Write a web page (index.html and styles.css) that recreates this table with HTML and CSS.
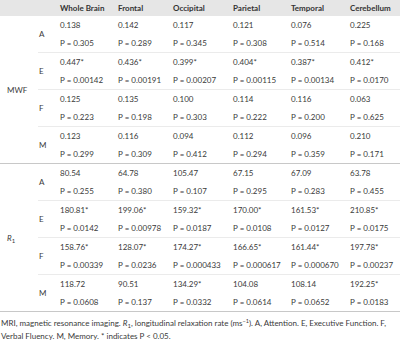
FILE: index.html
```html
<!DOCTYPE html>
<html>
<head>
<meta charset="utf-8">
<link rel="stylesheet" href="styles.css">
</head>
<body>
<table class="tbl">
  <colgroup>
    <col class="c-grp"><col class="c-cat"><col class="c-wb"><col class="c-fr"><col class="c-oc"><col class="c-pa"><col class="c-te"><col class="c-ce">
  </colgroup>
  <thead>
    <tr><th></th><th></th><th>Whole Brain</th><th>Frontal</th><th>Occipital</th><th>Parietal</th><th>Temporal</th><th>Cerebellum</th></tr>
  </thead>
  <tbody>
    <tr class="v"><td rowspan="8" class="grp end">MWF</td><td rowspan="2" class="cat">A</td><td>0.138</td><td>0.142</td><td>0.117</td><td>0.121</td><td>0.076</td><td>0.225</td></tr>
    <tr class="p"><td>P = 0.305</td><td>P = 0.289</td><td>P = 0.345</td><td>P = 0.308</td><td>P = 0.514</td><td>P = 0.168</td></tr>
    <tr class="v"><td rowspan="2" class="cat">E</td><td>0.447*</td><td>0.436*</td><td>0.399*</td><td>0.404*</td><td>0.387*</td><td>0.412*</td></tr>
    <tr class="p"><td>P = 0.00142</td><td>P = 0.00191</td><td>P = 0.00207</td><td>P = 0.00115</td><td>P = 0.00134</td><td>P = 0.0170</td></tr>
    <tr class="v"><td rowspan="2" class="cat">F</td><td>0.125</td><td>0.135</td><td>0.100</td><td>0.114</td><td>0.116</td><td>0.063</td></tr>
    <tr class="p"><td>P = 0.223</td><td>P = 0.198</td><td>P = 0.303</td><td>P = 0.222</td><td>P = 0.200</td><td>P = 0.625</td></tr>
    <tr class="v"><td rowspan="2" class="cat end">M</td><td>0.123</td><td>0.116</td><td>0.094</td><td>0.112</td><td>0.096</td><td>0.210</td></tr>
    <tr class="p last"><td>P = 0.299</td><td>P = 0.309</td><td>P = 0.412</td><td>P = 0.294</td><td>P = 0.359</td><td>P = 0.171</td></tr>

    <tr class="v"><td rowspan="8" class="grp end"><i>R</i><sub>1</sub></td><td rowspan="2" class="cat">A</td><td>80.54</td><td>64.78</td><td>105.47</td><td>67.15</td><td>67.09</td><td>63.78</td></tr>
    <tr class="p"><td>P = 0.255</td><td>P = 0.380</td><td>P = 0.107</td><td>P = 0.295</td><td>P = 0.283</td><td>P = 0.455</td></tr>
    <tr class="v"><td rowspan="2" class="cat">E</td><td>180.81*</td><td>199.06*</td><td>159.32*</td><td>170.00*</td><td>161.53*</td><td>210.85*</td></tr>
    <tr class="p"><td>P = 0.0142</td><td>P = 0.00978</td><td>P = 0.0187</td><td>P = 0.0108</td><td>P = 0.0127</td><td>P = 0.0175</td></tr>
    <tr class="v"><td rowspan="2" class="cat">F</td><td>158.76*</td><td>128.07*</td><td>174.27*</td><td>166.65*</td><td>161.44*</td><td>197.78*</td></tr>
    <tr class="p"><td>P = 0.00339</td><td>P = 0.0236</td><td>P = 0.000433</td><td>P = 0.000617</td><td>P = 0.000670</td><td>P = 0.00237</td></tr>
    <tr class="v"><td rowspan="2" class="cat end">M</td><td>118.72</td><td>90.51</td><td>134.29*</td><td>104.08</td><td>108.14</td><td>192.25*</td></tr>
    <tr class="p last"><td>P = 0.0608</td><td>P = 0.137</td><td>P = 0.0332</td><td>P = 0.0614</td><td>P = 0.0652</td><td>P = 0.0183</td></tr>
  </tbody>
</table>
<p class="note">MRI, magnetic resonance imaging. <i>R</i><sub>1</sub>, longitudinal relaxation rate (ms<sup>−1</sup>). A, Attention. E, Executive Function. F, Verbal Fluency. M, Memory. * indicates P &lt; 0.05.</p>
</body>
</html>
```

FILE: styles.css
```css
html, body {
  margin: 0;
  padding: 0;
  background: #ffffff;
}
body {
  font-family: Lato, "Liberation Sans", sans-serif;
  color: #3a3a3a;
  font-size: 8px;
}
.tbl {
  width: 400px;
  border-collapse: collapse;
  table-layout: fixed;
}
.c-grp { width: 38px; }
.c-cat { width: 22px; }
.c-wb { width: 58px; }
.c-fr { width: 55px; }
.c-oc { width: 60px; }
.c-pa { width: 58px; }
.c-te { width: 59px; }
.c-ce { width: 50px; }
.tbl th {
  background: #e6e6e6;
  height: 16px;
  padding: 0;
  text-align: left;
  font-weight: 700;
  font-size: 8px;
  color: #333;
  white-space: nowrap;
}
.tbl td {
  padding: 0;
  text-align: left;
  white-space: nowrap;
  vertical-align: middle;
}
.tbl tr.v td, .tbl tr.p td {
  height: 18px;
}
.tbl tr.p td {
  border-bottom: 1px solid #ebebeb;
}
.tbl td.cat {
  border-bottom: 1px solid #ebebeb;
}
.tbl tr.p.last td, .tbl td.cat.end, .tbl td.grp.end {
  border-bottom: 1px solid #c8c8c8;
}
.tbl td.grp {
  padding-left: 7px;
}
.tbl td.cat {
  padding-left: 1px;
}
sub {
  font-size: 6px;
  position: relative;
  top: 2px;
  vertical-align: baseline;
}
sup {
  font-size: 5.5px;
  position: relative;
  top: -3px;
  vertical-align: baseline;
}
.note {
  margin: 5px 0 0 1px;
  font-size: 8px;
  line-height: 12px;
  color: #3a3a3a;
}
```
